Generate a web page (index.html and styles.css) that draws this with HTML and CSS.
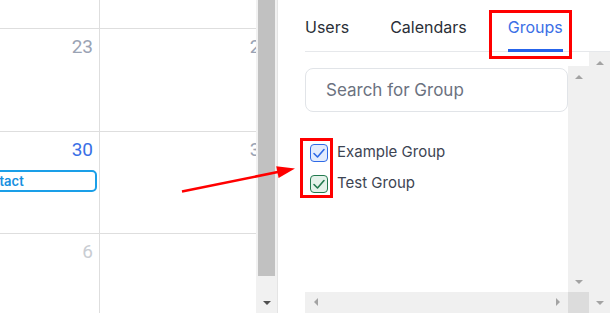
FILE: index.html
```html
<html>

<head>
    <title>Groups</title>
    <link rel="stylesheet" href="styles.css">
</head>

<body>
    <div class="calendar">
        <div class="cal-grid">
            <div class="cell"></div>
            <div class="cell"></div>
            <div class="cell"><div class="day">23</div></div>
            <div class="cell"><div class="day">24</div></div>
            <div class="cell">
                <div class="day today">30</div>
                <div class="event">Contact</div>
            </div>
            <div class="cell"><div class="day">31</div></div>
            <div class="cell"><div class="day other">6</div></div>
            <div class="cell"><div class="day other">7</div></div>
        </div>
    </div>

    <div class="side-scroll">
        <div class="thumb"></div>
        <div class="btn"><span class="arrow down dark"></span></div>
    </div>

    <div class="panel">
        <div class="tabs">
            <div class="tab">Users</div>
            <div class="tab">Calendars</div>
            <div class="tab active">Groups</div>
        </div>
        <div class="panel-body">
            <div class="body-main">
                <div class="scroll-box">
                    <div class="scroll-content">
                        <input class="search" type="text" placeholder="Search for Group" />
                        <ul class="groups">
                            <li>
                                <span class="check blue">
                                    <svg width="18" height="18" viewBox="0 0 18 18"><polyline points="4,9.5 7.5,13 14,5.5" /></svg>
                                </span>
                                <span class="label">Example Group</span>
                            </li>
                            <li>
                                <span class="check green">
                                    <svg width="18" height="18" viewBox="0 0 18 18"><polyline points="4,9.5 7.5,13 14,5.5" /></svg>
                                </span>
                                <span class="label">Test Group</span>
                            </li>
                        </ul>
                    </div>
                    <div class="vbar">
                        <div class="btn"><span class="arrow up"></span></div>
                        <div class="btn"><span class="arrow down"></span></div>
                    </div>
                </div>
                <div class="hbar-row">
                    <div class="hbar">
                        <div class="btn"><span class="arrow left"></span></div>
                        <div class="btn"><span class="arrow right"></span></div>
                    </div>
                    <div class="corner"></div>
                </div>
            </div>
            <div class="vbar outer">
                <div class="btn"><span class="arrow up"></span></div>
                <div class="btn"><span class="arrow down"></span></div>
            </div>
        </div>
    </div>

    <!-- red annotation marks -->
    <div class="mark mark-tab"></div>
    <div class="mark mark-checks"></div>
    <svg class="pointer" width="610" height="313" viewBox="0 0 610 313">
        <line x1="182" y1="191.5" x2="279" y2="171.8" />
        <polygon points="295,168.5 276.2,166.2 278.6,178" />
    </svg>
</body>

</html>
```

FILE: styles.css
```css
body {
    margin: 0;
    width: 610px;
    height: 313px;
    overflow: hidden;
    display: flex;
    position: relative;
    background: #fff;
    font-family: Inter, "Noto Sans", sans-serif;
}

/* calendar on the left, cut off by the window */
.calendar {
    width: 256px;
    overflow: hidden;
    flex-shrink: 0;
}

.cal-grid {
    display: grid;
    grid-template-columns: 137px 178px;
    grid-template-rows: 29px 103px 102px 102px;
    margin-left: -37px;
    width: 315px;
}

.cell {
    box-sizing: border-box;
    border-right: 1px solid #dedede;
    border-bottom: 1px solid #dedede;
}

.day {
    text-align: right;
    padding: 7px 6px 0 0;
    font-family: Roboto, "Liberation Sans", sans-serif;
    font-size: 19px;
    line-height: 22px;
    color: #9aa3b4;
}

.day.today {
    color: #3a6fe6;
}

.day.other {
    color: #c9cdd3;
}

.event {
    margin: 9px 2px 0 3px;
    height: 22px;
    box-sizing: border-box;
    border: 2px solid #1a9fe8;
    border-radius: 5px;
    padding: 0 6px;
    font-size: 13px;
    font-weight: 600;
    line-height: 18px;
    color: #1590e0;
}

/* page scrollbar between calendar and panel */
.side-scroll {
    width: 21px;
    flex-shrink: 0;
    background: #f1f1f1;
    display: flex;
    flex-direction: column;
    justify-content: space-between;
}

.side-scroll .thumb {
    height: 276px;
    margin: 0 2px;
    background: #c1c1c1;
}

.btn {
    width: 21px;
    height: 21px;
    display: flex;
    align-items: center;
    justify-content: center;
}

.arrow {
    width: 0;
    height: 0;
    border: 4px solid transparent;
}

.arrow.up {
    border-top: 0;
    border-bottom-color: #a3a3a3;
}

.arrow.down {
    border-bottom: 0;
    border-top-color: #a3a3a3;
}

.arrow.left {
    border-left: 0;
    border-right-color: #a3a3a3;
}

.arrow.right {
    border-right: 0;
    border-left-color: #a3a3a3;
}

.arrow.down.dark {
    border-top-color: #505050;
}

/* side panel */
.panel {
    flex: 1;
    border-left: 1px solid #e4e4e4;
    display: flex;
    flex-direction: column;
}

.tabs {
    display: flex;
    gap: 41px;
    height: 52px;
    box-sizing: border-box;
    margin-left: 27px;
    box-shadow: inset 0 -1px #e6e8eb;
}

.tab {
    box-sizing: border-box;
    height: 52px;
    padding-top: 17px;
    font-size: 16px;
    line-height: 20px;
    color: #2a2f37;
}

.tab.active {
    color: #3b6fe6;
    border-bottom: 3px solid #2563eb;
}

.panel-body {
    flex: 1;
    display: flex;
    min-height: 0;
}

.body-main {
    flex: 1;
    margin-left: 27px;
    padding-top: 14px;
    display: flex;
    flex-direction: column;
}

.scroll-box {
    display: flex;
    height: 228px;
}

.scroll-content {
    flex: 1;
}

.vbar {
    width: 21px;
    flex-shrink: 0;
    background: #f0f0f0;
    display: flex;
    flex-direction: column;
    justify-content: space-between;
}

.hbar-row {
    display: flex;
    height: 21px;
}

.hbar {
    flex: 1;
    background: #f0f0f0;
    display: flex;
    justify-content: space-between;
}

.hbar .btn {
    height: 19px;
}

.corner {
    width: 21px;
    background: #dcdcdc;
}

.search {
    display: block;
    margin-top: 2px;
    width: 263px;
    height: 44px;
    box-sizing: border-box;
    border: 1px solid #e1e4e8;
    border-radius: 8px;
    padding: 0 0 0 20px;
    font-family: Inter, "Noto Sans", sans-serif;
    font-size: 17px;
    outline: none;
}

.search::placeholder {
    color: #6b7280;
}

.groups {
    list-style: none;
    margin: 25px 0 0 0;
    padding: 0;
}

.groups li {
    display: flex;
    align-items: center;
    gap: 9px;
    height: 31px;
    padding-left: 5px;
    font-size: 15px;
    color: #3d4452;
}

.groups .label {
    padding-bottom: 2px;
}

.check {
    width: 18px;
    height: 18px;
    box-sizing: border-box;
    border: 1.5px solid;
    border-radius: 4px;
    display: flex;
    align-items: center;
    justify-content: center;
}

.check svg {
    flex-shrink: 0;
    fill: none;
    stroke-width: 1.6;
    stroke-linecap: round;
    stroke-linejoin: round;
}

.check.blue {
    border-color: #2f6ae6;
    background: #e3ecfd;
    stroke: #2f6ae6;
}

.check.green {
    border-color: #237a4f;
    background: #e4f2ea;
    stroke: #237a4f;
}

/* annotations drawn on top of the screenshot */
.mark {
    position: absolute;
    border: 3px solid #ff0000;
    box-sizing: border-box;
}

.mark-tab {
    left: 489px;
    top: 10px;
    width: 83px;
    height: 49px;
}

.mark-checks {
    left: 300px;
    top: 138px;
    width: 33px;
    height: 60px;
}

.pointer {
    position: absolute;
    left: 0;
    top: 0;
    pointer-events: none;
}

.pointer line {
    stroke: #ff0000;
    stroke-width: 2.5;
}

.pointer polygon {
    fill: #ff0000;
}
```
